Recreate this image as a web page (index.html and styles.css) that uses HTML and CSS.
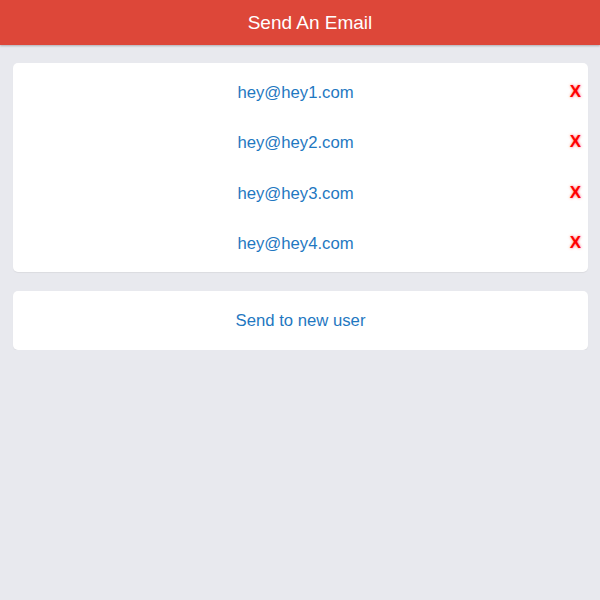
FILE: index.html
```html
<!DOCTYPE html>
<html>
<head>
<meta charset="utf-8">
<link rel="stylesheet" href="styles.css">
</head>
<body>
<header class="bar"><span class="title">Send An Email</span></header>
<main class="content">
  <ul class="card list">
    <li class="row"><span class="email">hey@hey1.com</span><span class="remove">X</span></li>
    <li class="row"><span class="email">hey@hey2.com</span><span class="remove">X</span></li>
    <li class="row"><span class="email">hey@hey3.com</span><span class="remove">X</span></li>
    <li class="row"><span class="email">hey@hey4.com</span><span class="remove">X</span></li>
  </ul>
  <div class="card action">Send to new user</div>
</main>
</body>
</html>
```
FILE: styles.css
```css
html, body {
  margin: 0;
  padding: 0;
  background: #e8e9ee;
  font-family: "Liberation Sans", Arial, sans-serif;
}
.bar {
  height: 45px;
  background: #dd4739;
  color: #fff;
  font-size: 19px;
  display: flex;
  align-items: center;
  justify-content: center;
  padding-left: 20px;
  box-shadow: 0 1px 2px rgba(0,0,0,0.25);
  position: relative;
}
.content {
  padding: 18px 12px 0 13px;
  display: flex;
  flex-direction: column;
  gap: 19px;
}
.card {
  background: #fff;
  border-radius: 5px;
  box-shadow: 0 1px 1px rgba(0,0,0,0.06);
}
.list {
  list-style: none;
  margin: 0;
  padding: 5px 0 3px;
}
.row {
  height: 50.25px;
  display: flex;
  align-items: center;
  justify-content: center;
  padding-right: 10px;
  position: relative;
  font-size: 16.7px;
}
.email {
  color: #1f78c1;
}
.remove {
  position: absolute;
  right: 7px;
  top: 50%;
  transform: translateY(-50%);
  color: #ff0000;
  font-weight: bold;
  font-size: 17px;
  text-shadow: 0 0 3px rgba(255,0,0,0.6);
  margin-top: -1px;
}
.action {
  height: 59px;
  display: flex;
  align-items: center;
  justify-content: center;
  color: #1f78c1;
  font-size: 16.7px;
}
```
